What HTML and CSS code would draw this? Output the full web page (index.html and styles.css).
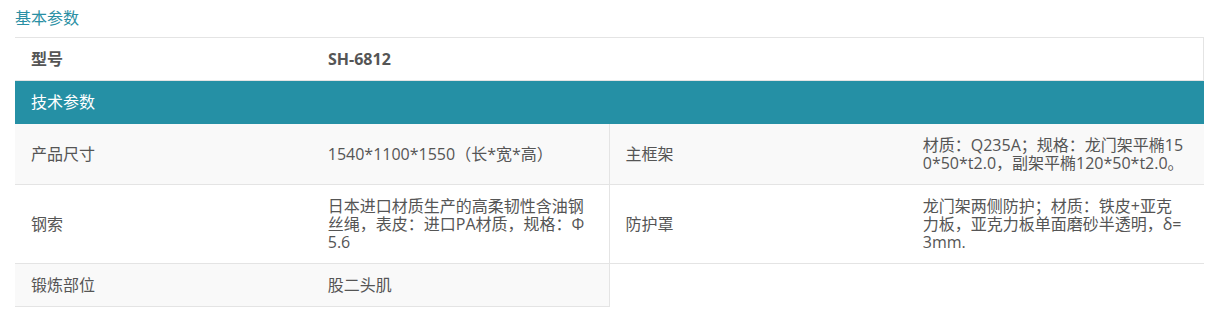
FILE: index.html
```html
<!DOCTYPE html>
<html lang="zh-CN">
<head>
<meta charset="utf-8">
<title>基本参数</title>
<link rel="stylesheet" href="styles.css">
</head>
<body>
<div class="params">
  <div class="params-title">基本参数</div>
  <div class="model-row">
    <div class="cell cell-label">型号</div>
    <div class="cell cell-value">SH-6812</div>
  </div>
  <div class="section-head">技术参数</div>
  <div class="specs">
    <div class="pair pair-left pair-shaded">
      <div class="cell cell-label">产品尺寸</div>
      <div class="cell cell-value">1540*1100*1550（长*宽*高）</div>
    </div>
    <div class="pair pair-right pair-shaded">
      <div class="cell cell-label">主框架</div>
      <div class="cell cell-value">材质：Q235A；规格：龙门架平椭150*50*t2.0，副架平椭120*50*t2.0。</div>
    </div>
    <div class="pair pair-left">
      <div class="cell cell-label">钢索</div>
      <div class="cell cell-value">日本进口材质生产的高柔韧性含油钢丝绳，表皮：进口PA材质，规格：Φ5.6</div>
    </div>
    <div class="pair pair-right">
      <div class="cell cell-label">防护罩</div>
      <div class="cell cell-value">龙门架两侧防护；材质：铁皮+亚克力板，亚克力板单面磨砂半透明，δ=3mm.</div>
    </div>
    <div class="pair pair-left pair-shaded">
      <div class="cell cell-label">锻炼部位</div>
      <div class="cell cell-value">股二头肌</div>
    </div>
  </div>
</div>
</body>
</html>
```
FILE: styles.css
```css
html, body {
  margin: 0;
  padding: 0;
  background: #ffffff;
}

body {
  font-family: "Open Sans", "Noto Sans CJK SC", sans-serif;
  font-size: 16px;
  color: #555555;
}

.params {
  width: 1189px;
  margin-left: 15px;
}

.params-title {
  height: 37px;
  line-height: 37px;
  color: #2a8fa4;
}

.model-row {
  display: grid;
  grid-template-columns: 297px 1fr;
  border-top: 1px solid #e4e4e4;
  border-right: 1px solid #e4e4e4;
  border-bottom: 1px solid #e4e4e4;
  font-weight: 700;
  background: #ffffff;
}

.section-head {
  height: 43px;
  line-height: 43px;
  padding-left: 16px;
  background: #2590a5;
  color: #ffffff;
}

.specs {
  display: grid;
  grid-template-columns: 1fr 1fr;
}

.pair {
  display: grid;
  grid-template-columns: 1fr 1fr;
  border-bottom: 1px solid #e4e4e4;
  background: #ffffff;
}

.pair-shaded {
  background: #f9f9f9;
}

.pair-left {
  border-right: 1px solid #e4e4e4;
}

.cell {
  display: flex;
  align-items: center;
  padding: 12px 18px 12px 16px;
  line-height: 18px;
  word-break: break-all;
}
```
